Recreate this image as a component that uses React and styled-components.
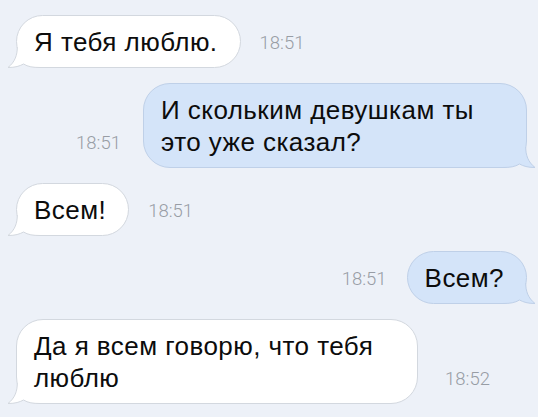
import React from "react";
import styled, { createGlobalStyle } from "styled-components";

const Global = createGlobalStyle`
  html, body { margin: 0; padding: 0; background: #edf1f8; }
  body { width: 538px; height: 417px; overflow: hidden; }
`;

const Page = styled.div`
  box-sizing: border-box;
  width: 538px;
  height: 417px;
  padding: 15px 11px 0 16px;
  display: flex;
  flex-direction: column;
  gap: 15px;
  background: #edf1f8;
  font-family: "Liberation Sans", Arial, sans-serif;
`;

const Row = styled.div`
  display: flex;
  align-items: flex-end;
  justify-content: ${(p) => (p.$out ? "flex-end" : "flex-start")};
  gap: ${(p) => p.$gap || 19}px;
`;

const Bubble = styled.div`
  position: relative;
  box-sizing: border-box;
  width: ${(p) => (p.$width ? `${p.$width}px` : "auto")};
  padding: 10px 22px 9px 17px;
  border-radius: 27px;
  border: 1px solid ${(p) => (p.$out ? "#bfd0e8" : "#d3d8df")};
  background: ${(p) => (p.$out ? "#d4e4f9" : "#ffffff")};
  font-size: 26px;
  line-height: 32px;
  letter-spacing: 0.45px;
  color: #0c0c0c;
`;

const Text = styled.span`
  position: relative;
  z-index: 1;
`;

const TailSvg = styled.svg`
  position: absolute;
  bottom: -1px;
  ${(p) => (p.$out ? "right: -10px; transform: scaleX(-1);" : "left: -10px;")}
  width: 40px;
  height: 21px;
  overflow: visible;
  z-index: 0;
`;

const Time = styled.div`
  font-family: Roboto, "Liberation Sans", sans-serif;
  font-weight: 300;
  font-size: 18.5px;
  line-height: 1;
  color: #989da5;
  margin-bottom: 16px;
`;

function Tail({ out }) {
  const fill = out ? "#d4e4f9" : "#ffffff";
  const stroke = out ? "#bfd0e8" : "#d3d8df";
  return (
    <TailSvg $out={out} viewBox="0 0 40 21">
      <path
        d="M10.3 0 C10.3 8 8 15 1 20.5 C8 20.6 13 19 16.5 17 C21 19.8 26 20.5 33 20.5 L40 20.5 L40 0 Z"
        fill={fill}
      />
      <path
        d="M10.3 0 C10.3 8 8 15 1 20.5 C8 20.6 13 19 16.5 17 C21 19.8 26 20.5 33 20.5 L40 20.5"
        fill="none"
        stroke={stroke}
        strokeWidth="1"
      />
    </TailSvg>
  );
}

function Message({ out, time, width, gap, children }) {
  const bubble = (
    <Bubble $out={out} $width={width}>
      <Tail out={out} />
      <Text>{children}</Text>
    </Bubble>
  );
  return (
    <Row $out={out} $gap={gap}>
      {out ? (
        <>
          <Time>{time}</Time>
          {bubble}
        </>
      ) : (
        <>
          {bubble}
          <Time>{time}</Time>
        </>
      )}
    </Row>
  );
}

export default function App() {
  return (
    <>
      <Global />
      <Page>
        <Message time="18:51">Я тебя люблю.</Message>
        <Message out time="18:51" width={384} gap={22}>
          И скольким девушкам ты это уже сказал?
        </Message>
        <Message time="18:51">Всем!</Message>
        <Message out time="18:51" gap={20}>
          Всем?
        </Message>
        <Message time="18:52" width={402} gap={27}>
          Да я всем говорю, что тебя люблю
        </Message>
      </Page>
    </>
  );
}
